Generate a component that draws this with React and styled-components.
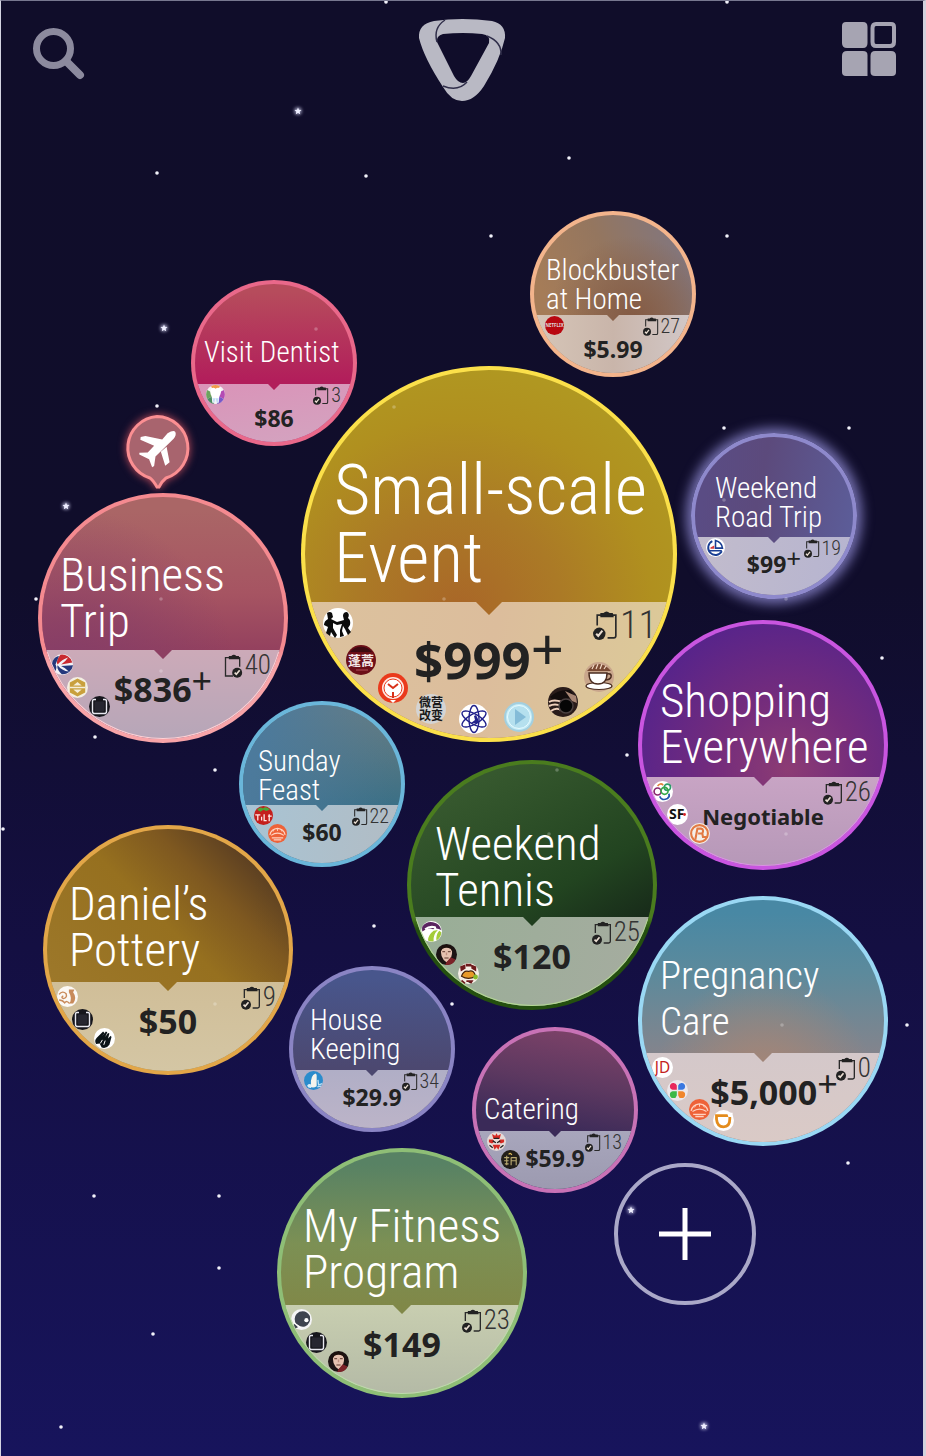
import React from "react";
import styled, { createGlobalStyle, css } from "styled-components";

const Global = createGlobalStyle`
  *, *::before, *::after { box-sizing: border-box; }
  body {
    margin: 0;
    background: #16124f;
    font-family: "Noto Sans", "Noto Sans CJK SC", sans-serif;
  }
  button { font: inherit; color: inherit; cursor: pointer; }
`;

const thin = `"Roboto Condensed", Roboto, "Noto Sans", sans-serif`;

const Screen = styled.main`
  position: relative;
  min-height: 100vh;
  overflow: hidden;
  border-top: 1px solid #77778f;
  border-left: 1px solid #d4d4e2;
  border-right: 3px solid #d2d2dc;
  background: linear-gradient(#100d2a 0%, #100d2b 40%, #140f42 65%, #17145c 100%);
`;

const TopBar = styled.header`
  position: relative;
  z-index: 2;
  display: grid;
  grid-template-columns: 1fr auto 1fr;
  align-items: start;
  padding: 16px 27px 0 31px;
`;

const IconButton = styled.button`
  display: block;
  padding: 0;
  border: 0;
  background: none;
  margin-top: ${(p) => p.$drop || 0}px;
  justify-self: ${(p) => p.$side || "center"};
  svg { display: block; }
`;

const Sky = styled.svg`
  position: absolute;
  top: -1px;
  left: calc(50% - 462px);
  width: 926px;
  height: 1456px;
  pointer-events: none;
  z-index: ${(p) => (p.$front ? 3 : 0)};
`;

const Board = styled.section`
  position: relative;
  z-index: 1;
  min-height: 1350px;
`;

/* Diameter, header height, logo size and text sizes shared by every bubble of one size. */
const sizes = {
  s: { d: 166, split: 100, title: 29, lead: 29, price: 23, plus: 26, up: 5, priceTop: 21, lift: 7, count: 20, logo: 19, clip: [16, 19], notch: 6 },
  m: { d: 250, split: 153, title: 47, lead: 46, price: 34, plus: 36, up: 8, priceTop: 22, lift: 0, count: 27, logo: 21, clip: [20, 24], notch: 9 },
  l: { d: 376, split: 232, title: 70, lead: 68, price: 51, plus: 58, up: 8, priceTop: 31, lift: 0, count: 38, logo: 30, clip: [25, 29], notch: 13 },
};

const Bubble = styled.button`
  position: absolute;
  left: calc(50% + ${(p) => p.$x}px);
  top: ${(p) => p.$y}px;
  width: ${(p) => sizes[p.$size].d}px;
  height: ${(p) => sizes[p.$size].d}px;
  display: grid;
  grid-template-rows: ${(p) => sizes[p.$size].split}px 1fr;
  padding: 0;
  border: 4px solid transparent;
  border-radius: 50%;
  overflow: hidden;
  text-align: left;
  background:
    ${(p) => p.$fill.map((layer) => `${layer} padding-box`).join(", ")},
    linear-gradient(${(p) => p.$ring} 0 63%, ${(p) => p.$foot || p.$ring} 68%) border-box;
  ${(p) => p.$glow && css`box-shadow: 0 0 12px 5px #8d88d0cc;`}

  ${(p) => p.$lip && css`
    &::after {
      content: "";
      position: absolute;
      inset: -1px;
      border: 2px solid ${p.$lip};
      border-radius: 50%;
      clip-path: inset(64% 0 0 0);
    }
  `}
`;

const Title = styled.span`
  align-self: end;
  padding-left: ${(p) => p.$indent}px;
  padding-bottom: ${(p) => p.$drop}px;
  font: 300 ${(p) => p.$text || sizes[p.$size].title}px / ${(p) => sizes[p.$size].lead}px ${thin};
  color: #fff;
  white-space: pre;
`;

const Panel = styled.span`
  position: relative;
  display: grid;
  color: #222;
  &::before {
    content: "";
    grid-area: 1 / 1;
    background: ${(p) => p.$panel};
    clip-path: polygon(
      0 0,
      calc(50% - ${(p) => sizes[p.$size].notch}px) 0,
      50% ${(p) => sizes[p.$size].notch}px,
      calc(50% + ${(p) => sizes[p.$size].notch}px) 0,
      100% 0, 100% 100%, 0 100%
    );
  }
`;

const Price = styled.span`
  grid-area: 1 / 1;
  position: relative;
  justify-self: center;
  align-self: start;
  padding-top: ${(p) => sizes[p.$size].priceTop - (p.$high ? sizes[p.$size].lift : 0)}px;
  padding-left: ${(p) => (p.$crowded ? 22 : 0)}px;
  font: 700 ${(p) => (p.$word ? 22 : sizes[p.$size].price)}px / ${(p) => (p.$size === "l" ? 52 : p.$size === "m" ? 34 : 26)}px "Noto Sans", sans-serif;
  white-space: nowrap;
`;

const Plus = styled.span`
  position: relative;
  top: -${(p) => sizes[p.$size].up}px;
  font-size: ${(p) => sizes[p.$size].plus}px;
  font-weight: 400;
  line-height: 0;
`;

const Count = styled.span`
  grid-area: 1 / 1;
  position: relative;
  justify-self: end;
  align-self: start;
  display: flex;
  align-items: center;
  gap: 2px;
  padding: ${(p) => (p.$size === "l" ? "5px 16px 0 0" : p.$size === "m" ? "3px 13px 0 0" : "1px 12px 0 0")};
  font: 300 ${(p) => sizes[p.$size].count}px / ${(p) => (p.$size === "l" ? 36 : p.$size === "m" ? 25 : 20)}px ${thin};
  color: #333;
`;

const slots = {
  s: [[25, 115], [39, 133]],
  m: [[25, 172], [40, 195], [62, 214], [86, 225]],
  l: [[37, 257], [60, 294], [92, 322], [130, 343], [173, 353], [218, 351], [262, 336], [298, 311]],
};

/* Provider badges sit over the panel, along the rim of the bubble. */
const Badge = styled.svg`
  position: absolute;
  left: ${(p) => Math.floor(slots[p.$size][p.$slot][0] - 4 - sizes[p.$size].logo / 2)}px;
  top: ${(p) => Math.floor(slots[p.$size][p.$slot][1] - 4 - sizes[p.$size].logo / 2)}px;
  width: ${(p) => sizes[p.$size].logo}px;
  height: ${(p) => sizes[p.$size].logo}px;
`;

const Pin = styled.button`
  position: absolute;
  left: calc(50% + ${(p) => p.$x}px);
  top: ${(p) => p.$y}px;
  padding: 0;
  border: 0;
  background: none;
  svg { display: block; overflow: visible; filter: drop-shadow(0 0 4px #f5606acc); }
  svg svg { filter: none; }
`;

const AddButton = styled.button`
  position: absolute;
  left: calc(50% + ${(p) => p.$x}px);
  top: ${(p) => p.$y}px;
  width: 142px;
  height: 142px;
  display: grid;
  place-items: center;
  padding: 0;
  border: 4px solid #aaa8c8;
  border-radius: 50%;
  background: none;
`;

const Disc = ({ c = "#fff" }) => <circle cx="15" cy="15" r="15" fill={c} />;

const marks = {
  tooth: (
    <>
      <Disc c="#f4f4f4" />
      <path d="M15 15L2 8A15 15 0 0 0 2 22Z" fill="#6ca35e" />
      <path d="M15 15L2 22A15 15 0 0 0 12 30Z" fill="#4d8a62" />
      <path d="M15 15L28 8A15 15 0 0 1 28 22Z" fill="#b44bb4" />
      <path d="M15 15L28 22A15 15 0 0 1 18 30Z" fill="#7858c8" />
      <path d="M15 15L8 2A15 15 0 0 1 22 2Z" fill="#f09a4a" />
      <path d="M8 6Q12 3 15 6Q19 3 23 6Q25 12 21 18L20 28H17L15 20L13 28H10L9 18Q5 12 8 6Z" fill="#fff" />
      <path d="M10 21L12 28H13L15 20L17 28H19L20 21Z" fill="#c2dcf6" />
    </>
  ),
  netflix: (
    <>
      <Disc c="#b80710" />
      <text x="15" y="18" textAnchor="middle" fontSize="7" fontWeight="700" fill="#ddd">NETFLIX</text>
    </>
  ),
  sail: (
    <>
      <Disc />
      <path d="M10 5A11.500 11.500 0 1 0 25 21" fill="none" stroke="#1a3f94" strokeWidth="3" />
      <path d="M15 4V16H26Q25 7 15 4Z" fill="none" stroke="#1a3f94" strokeWidth="2.5" />
      <path d="M7 15L13 12V17H7Z" fill="#d83a3a" />
      <path d="M6 20H25" stroke="#1a3f94" strokeWidth="2.5" />
    </>
  ),
  handshake: (
    <>
      <Disc />
      <path d="M4 5Q7 3 9 5L10 9L8 11L14 14L21 12L20 8Q20 4 24 4Q27 6 25 10Q28 12 27 17L25 20L28 24L25 27L22 21L20 18L19 23L21 28L17 29L17 22L19 16L14 17L10 15L10 20L14 27L12 30L8 24L7 28L3 25L5 19L1 17Q1 13 5 11Z" fill="#0c0c0c" />
    </>
  ),
  theatre: (
    <>
      <Disc c="#6c0f18" />
      <path d="M4 7A14 14 0 0 1 26 7" fill="#3c0a12" />
      <text x="15" y="20" textAnchor="middle" fontSize="13" fontWeight="700" fill="#f4e8e8">蓬蒿</text>
      <path d="M10 25H22" stroke="#b05058" strokeWidth="1" />
    </>
  ),
  clock: (
    <>
      <Disc c="#ea3a1c" />
      <circle cx="15" cy="15" r="11" fill="#ffe9e4" />
      <circle cx="15" cy="15" r="9" fill="#fff" stroke="#ea3a1c" strokeWidth="1" />
      <path d="M10 11L15 15L20 11M15 19V25" fill="none" stroke="#d8321a" strokeWidth="2" />
      <path d="M12 27L15 30L18 27Z" fill="#fff" />
    </>
  ),
  seal: (
    <>
      <Disc c="#d4d4d4" />
      <text textAnchor="middle" fontSize="12" fontWeight="700" fill="#1a1a1a">
        <tspan x="15" y="13">微营</tspan>
        <tspan x="15" y="26">改变</tspan>
      </text>
    </>
  ),
  atom: (
    <>
      <Disc />
      <g fill="none" stroke="#22228c" strokeWidth="1.4">
        <ellipse cx="15" cy="15" rx="5" ry="13.5" />
        <ellipse cx="15" cy="15" rx="5" ry="13.5" transform="rotate(60 15 15)" />
        <ellipse cx="15" cy="15" rx="5" ry="13.5" transform="rotate(120 15 15)" />
      </g>
      <path d="M12 19H19V15L17 11L15 12L16 16Z" fill="#22228c" />
    </>
  ),
  play: (
    <>
      <Disc c="#a3cfdf" />
      <circle cx="15" cy="15" r="13" fill="#c4ebf6" />
      <circle cx="15" cy="15" r="11.5" fill="#b5e0ee" stroke="#e8fbff" strokeWidth="1" />
      <path d="M11 7L22 15L11 23Z" fill="#84bcd8" />
    </>
  ),
  camera: (
    <>
      <Disc c="#2a1c1a" />
      <path d="M2 10Q10 2 22 3L26 9L14 14L4 12Z" fill="#120c0c" />
      <path d="M1 15Q6 12 14 15M1 19Q7 16 13 19M3 24Q8 20 13 23" fill="none" stroke="#f0d0bc" strokeWidth="2" />
      <path d="M17 4L28 9L29 16L24 14Z" fill="#a88674" />
      <circle cx="18" cy="19" r="7" fill="#060606" stroke="#4a4040" strokeWidth="1.5" />
    </>
  ),
  coffee: (
    <>
      <Disc c="#c9a68c" />
      <path d="M3 9Q15 -5 27 9Z" fill="#7a4a34" />
      <path d="M8 7L10 3M12 7L14 2M16 7L18 2M20 7L22 4" stroke="#f0d8c4" strokeWidth="1.2" />
      <ellipse cx="15" cy="24" rx="13" ry="3.5" fill="#fff" stroke="#4a2c20" strokeWidth="1.2" />
      <path d="M5 11H23Q23 22 14 22Q5 22 5 11Z" fill="#fff" stroke="#4a2c20" strokeWidth="1.4" />
      <path d="M23 12Q28 11 27 15Q26 18 21 18" fill="none" stroke="#4a2c20" strokeWidth="1.6" />
    </>
  ),
  airline: (
    <>
      <Disc c="#f2f2f6" />
      <path d="M12 1A15 15 0 0 1 29 12L13 15Q20 10 23 5Q14 8 8 15Q5 10 12 1Z" fill="#c92a30" />
      <path d="M14 29A15 15 0 0 0 30 16L13 17Q20 20 24 25Q14 24 8 16Q6 21 14 29Z" fill="#24387c" />
      <path d="M1 10A15 15 0 0 0 4 25Q8 20 5 15Q8 8 10 3Q4 4 1 10Z" fill="#24387c" />
    </>
  ),
  hexagon: (
    <>
      <Disc c="#f4efe2" />
      <path d="M15 2L26 8V22L15 28L4 22V8Z" fill="#c9a03c" />
      <path d="M15 7L21 12H9ZM15 23L21 18H9Z" fill="#f6eed8" />
      <path d="M4 15H26" stroke="#f6eed8" strokeWidth="2" />
    </>
  ),
  square: (
    <>
      <Disc c="#16161c" />
      <path d="M10 5H7Q5 5 5 8V22Q5 25 8 25H22Q25 25 25 22V8Q25 5 23 5H20" fill="none" stroke="#e8e8f0" strokeWidth="2" />
      <rect x="8" y="8" width="14" height="14" rx="2" fill="#262630" />
    </>
  ),
  rings: (
    <>
      <Disc />
      <g fill="none" strokeWidth="2.4">
        <circle cx="8" cy="15" r="5" stroke="#8a2870" />
        <path d="M8 7Q12 2 16 6" stroke="#e0823c" />
        <circle cx="22" cy="9" r="4.5" stroke="#2e9a6a" />
        <path d="M11 22Q14 29 22 25Q26 22 24 18" stroke="#2458b0" />
        <circle cx="18" cy="14" r="5" stroke="#38a848" />
      </g>
    </>
  ),
  courier: (
    <>
      <Disc />
      <text x="14" y="22" textAnchor="middle" fontSize="20" fontWeight="700" fill="#111">SF</text>
      <circle cx="25" cy="15" r="2" fill="#d82020" />
    </>
  ),
  letterA: (
    <>
      <Disc c="#f4efe8" />
      <circle cx="15" cy="15" r="12" fill="none" stroke="#e27a44" strokeWidth="3" />
      <path d="M9 24L12 8H17Q22 9 19 15H13M19 15L20 20H27" fill="none" stroke="#e27a44" strokeWidth="3" />
    </>
  ),
  tomato: (
    <>
      <Disc c="#c41f1c" />
      <path d="M5 6Q10 0 14 4Q20 -1 25 6L19 8L15 6L10 9Z" fill="#4aa83a" />
      <path d="M2 14H10M6 14V23M12 17V23M16 13V23H20M22 16H28M24 13V24" fill="none" stroke="#ffeae8" strokeWidth="2" />
    </>
  ),
  bun: (
    <>
      <Disc c="#ee6238" />
      <path d="M3 17Q5 8 15 7Q25 8 27 17M5 18Q15 11 25 18M6 22H24M9 25H21" fill="none" stroke="#ffd2c0" strokeWidth="1.8" />
      <path d="M10 8L8 12M15 7V11M20 8L22 12" stroke="#ffd2c0" strokeWidth="1.4" />
    </>
  ),
  court: (
    <>
      <Disc />
      <path d="M2 8A15 15 0 0 1 29 13Q22 9 18 12Q10 8 2 15Q1 11 2 8Z" fill="#5a2460" />
      <path d="M6 12Q12 7 20 9Q22 12 15 15Q8 20 8 28" fill="none" stroke="#fff" strokeWidth="3" />
      <path d="M18 14Q10 20 10 28Q14 30 18 29Q17 20 24 13ZM26 14Q21 20 22 28A15 15 0 0 0 29 16Z" fill="#a4cc3a" />
    </>
  ),
  portrait: (
    <>
      <Disc c="#1c1414" />
      <path d="M7 11Q7 2 15 2Q23 2 23 11Q23 19 18 24L15 26L11 23Q7 18 7 11Z" fill="#e6c2b0" />
      <path d="M6 12Q5 1 15 1Q25 1 24 12L21 7Q15 4 9 7Z" fill="#1c100c" />
      <path d="M9 11H13M17 11H21M12 20H18" stroke="#5a342a" strokeWidth="1.4" />
      <path d="M15 12V16" stroke="#c09080" strokeWidth="2" />
      <path d="M21 19L28 22A15 15 0 0 1 13 30L15 26Z" fill="#7c2228" />
    </>
  ),
  mascot: (
    <>
      <Disc c="#f6efe6" />
      <path d="M3 5L10 2L11 8L4 12ZM19 2L26 5L26 12L19 8ZM11 1H19V5H11Z" fill="#6e1a1c" />
      <path d="M5 19Q8 10 15 12Q23 9 25 19Q15 25 5 19Z" fill="#e89a28" stroke="#46240c" strokeWidth="1.6" />
      <circle cx="25" cy="20" r="3.5" fill="#86bc2c" />
      <path d="M5 25L10 29M12 26H20L18 29" stroke="#6e1a1c" strokeWidth="2.4" />
    </>
  ),
  vase: (
    <>
      <Disc c="#fbf8f4" />
      <path d="M17 5H25L23 9Q29 17 23 25H18Q22 17 17 9Z" fill="#c88a5a" />
      <path d="M3 12Q8 6 13 11Q15 17 9 18Q5 16 9 14M3 20Q8 20 11 24Q14 20 18 25" fill="none" stroke="#c88a5a" strokeWidth="2" />
    </>
  ),
  hands: (
    <>
      <Disc />
      <path d="M4 14L13 5L15 7L11 13L17 5L19 6L16 13L20 7L22 8L20 15L24 11L25 13L22 24Q18 30 11 28L8 22L3 23Q0 18 4 14Z" fill="#0b1418" />
      <path d="M12 17L9 22M16 18L14 24" stroke="#fff" strokeWidth="1.4" />
    </>
  ),
  jd: (
    <>
      <Disc />
      <text x="15" y="23" textAnchor="middle" fontSize="22" fill="#c41e22">JD</text>
    </>
  ),
  petals: (
    <>
      <Disc c="#ece8ec" />
      <path d="M14 14H8A5 5 0 1 1 14 8Z" fill="#e8285c" />
      <path d="M16 14V8A5 5 0 1 1 22 14Z" fill="#3a78e0" />
      <path d="M14 16V22A5 5 0 1 1 8 16Z" fill="#3cb848" />
      <path d="M16 16H22A5 5 0 1 1 16 22Z" fill="#f0862c" />
    </>
  ),
  taxi: (
    <>
      <Disc />
      <path d="M5 8H24V13Q24 24 15 24Q6 24 5 13Z" fill="none" stroke="#e48c1c" strokeWidth="4" />
      <path d="M20 4H28V10H22Z" fill="#fff" />
    </>
  ),
  cleaning: (
    <>
      <Disc c="#2a8ccc" />
      <path d="M11 22Q10 7 18 4L20 6V24Q14 28 9 24Z" fill="#f4f4ec" />
      <path d="M22 14L23 22L29 20M21 25L27 24" fill="none" stroke="#bfe2f4" strokeWidth="2" />
      <path d="M5 23Q8 19 12 22L11 27Q6 27 5 23Z" fill="#d8eefa" />
    </>
  ),
  lion: (
    <>
      <Disc c="#e6dad8" />
      <path d="M8 3L13 6L15 2L17 6L22 3L20 11H10ZM3 12H9L12 15L8 18L3 16ZM27 12H21L18 15L22 18L27 16ZM9 20H21L18 28L15 24L12 28Z" fill="#d62a24" />
      <path d="M11 10H19M9 14L14 17M21 14L16 17M4 21L9 25M26 21L21 25" stroke="#222" strokeWidth="2" />
    </>
  ),
  tavern: (
    <>
      <Disc c="#221e1a" />
      <path d="M5 12H13M5 17H12M6 22H12M9 9V24M16 12H24V24M16 12V24M16 17H24" fill="none" stroke="#b8a870" strokeWidth="1.8" />
      <path d="M12 7Q15 3 17 8" fill="none" stroke="#d8b858" strokeWidth="2" />
    </>
  ),
  paddle: (
    <>
      <Disc c="#f4f4f6" />
      <path d="M6 19Q3 9 12 4Q22 1 27 10Q29 21 20 25Q14 26 10 23L7 21Z" fill="#3e4450" />
      <path d="M5 21L3 25L6 28L10 26Z" fill="#3e4450" />
      <circle cx="22" cy="16" r="3" fill="#fff" />
      <path d="M4 19L14 27" stroke="#fff" strokeWidth="1.5" />
    </>
  ),
};

const Clipboard = ({ size, flip }) => {
  const [w, h] = sizes[size].clip;
  const cx = flip ? 17 : 6;
  return (
    <svg width={w} height={h} viewBox="0 0 24 28" aria-hidden="true">
      <path
        d={flip ? "M20 15V4H3V26H12" : "M4 14V4H22V24Q22 26 20 26H14"}
        fill="none"
        stroke="#2a2a2a"
        strokeWidth="1.6"
      />
      <path d="M7 2H10Q13 -1 16 2H19L20 6H7Z" fill="#222" />
      <circle cx={cx} cy="22" r="6" fill="#222" />
      <path d={`M${cx - 3} 22L${cx - 1} 24L${cx + 3} 19`} fill="none" stroke="#e8dcd0" strokeWidth="2" />
    </svg>
  );
};

const wishes = [
  { size: "s", x: 530, y: 211, title: "Blockbuster\nat Home", indent: 12, drop: 1, price: "$5.99", count: 27, logos: ["netflix"],
    ring: "#f3b48c", fill: ["radial-gradient(circle at 62% 66%, #835a44 0, transparent 58%)", "linear-gradient(65deg, #a57c58 20%, #94765f 55%, #83767c 88%)"], panel: "linear-gradient(90deg, #d6c6b8, #c9b5aa 50%, #d2c8c8)" },
  { size: "s", x: 191, y: 280, title: "Visit Dentist", indent: 9, drop: 17, price: "$86", count: 3, logos: ["tooth"],
    ring: "#e9688a", fill: ["linear-gradient(#b64c5c 5%, #b21d5b 62%)"], panel: "linear-gradient(170deg, #da93b8, #d3a4c0)" },
  { size: "l", x: 301, y: 366, title: "Small-scale\nEvent", indent: 29, drop: 10, price: "$999", plus: true, count: 11,
    logos: ["handshake", "theatre", "clock", "seal", "atom", "play", "camera", "coffee"],
    ring: "#fbe04a", fill: ["radial-gradient(circle at 42% 66%, #a96628 0, #ab7a26 32%, #b0901f 60%, #b09a22 82%)"], panel: "linear-gradient(100deg, #dcc29e, #dcbd9c 50%, #dccb98)" },
  { size: "s", x: 691, y: 433, title: "Weekend\nRoad Trip", indent: 20, drop: 5, price: "$99", plus: true, high: true, count: 19, logos: ["sail"], glow: true,
    ring: "#8e89cc", fill: ["linear-gradient(100deg, #5a4c84 10%, #5c4a7c 40%, #5c5f9c)"], panel: "linear-gradient(100deg, #c2bccc, #b6b4d0)" },
  { size: "m", x: 38, y: 493, title: "Business\nTrip", indent: 18, drop: 6, price: "$836", plus: true, count: 40, flip: true,
    logos: ["airline", "hexagon", "square"], ring: "#f48a90", foot: "#f8a4a8", lip: "#ffd0d4",
    fill: ["radial-gradient(circle at 10% 75%, #853e68 0, transparent 60%)", "linear-gradient(#aa6666 5%, #a65462 40%, #93405e 64%)"], panel: "linear-gradient(#ccaab8, #b6a6b8)" },
  { size: "m", x: 638, y: 620, title: "Shopping\nEverywhere", indent: 18, drop: 7, price: "Negotiable", word: true, count: 26,
    logos: ["rings", "courier", "letterA"], ring: "#c955e0", lip: "#dc90e6",
    fill: ["radial-gradient(circle at 60% 60%, #8c3c74 0, #742c7c 35%, #58248a 75%)"], panel: "linear-gradient(#c8a4c4, #b698b8)" },
  { size: "s", x: 239, y: 701, title: "Sunday\nFeast", indent: 15, drop: 0, price: "$60", high: true, count: 22, logos: ["tomato", "bun"],
    ring: "#6ab6da", fill: ["linear-gradient(100deg, #4c7a9c 10%, transparent 90%)", "linear-gradient(#687c80 5%, #3c7086 62%)"], panel: "linear-gradient(100deg, #a8c4d4, #b2bcc4)" },
  { size: "m", x: 407, y: 760, title: "Weekend\nTennis", indent: 24, drop: 4, price: "$120", count: 25,
    logos: ["court", "portrait", "mascot"], ring: "#4a7c1e", foot: "#24500f", lip: "#b4d894",
    fill: ["linear-gradient(150deg, #36582e 15%, #224420 55%, #182c1a 75%)"], panel: "linear-gradient(100deg, #98ae96, #a6aca0)" },
  { size: "m", x: 43, y: 825, title: "Daniel’s\nPottery", indent: 22, drop: 9, price: "$50", count: 9,
    logos: ["vase", "square", "hands"], ring: "#e2a648",
    fill: ["linear-gradient(225deg, #573c22 12%, #7e5820 28%, #96701f 45%, #a07c30)"], panel: "linear-gradient(#d0be98, #d4c6a4)" },
  { size: "m", x: 638, y: 896, title: "Pregnancy\nCare", indent: 18, drop: 8, text: 39, price: "$5,000", plus: true, count: 0,
    logos: ["jd", "petals", "bun", "taxi"], ring: "#9ad8f4",
    fill: ["radial-gradient(circle at 50% 75%, #a88674 0, transparent 50%)", "linear-gradient(#4888a4 5%, #5c8a9c 30%, #84848c 64%)"], panel: "linear-gradient(#d4c8ca, #dacac6)" },
  { size: "s", x: 289, y: 966, title: "House\nKeeping", indent: 17, drop: 6, price: "$29.9", high: true, count: 34, logos: ["cleaning"],
    ring: "#8a84c4", fill: ["linear-gradient(#48568c 5%, #4c4870 62%)"], panel: "linear-gradient(#b0aec6, #bcb4c8)" },
  { size: "s", x: 472, y: 1027, title: "Catering", indent: 8, drop: 7, price: "$59.9", high: true, count: 13, logos: ["lion", "tavern"],
    ring: "#c872b6", fill: ["linear-gradient(190deg, #7c4268 5%, #5c3860 35%, #3a2a58 62%)"], panel: "linear-gradient(#a8a6bc, #9c9ab0)" },
  { size: "m", x: 277, y: 1148, title: "My Fitness\nProgram", indent: 22, drop: 10, price: "$149", count: 23,
    logos: ["paddle", "square", "portrait"], ring: "#8ebe76", lip: "#bcdcaa",
    fill: ["linear-gradient(#588264 5%, #7c9054 38%, #808848 64%)"], panel: "linear-gradient(#c8ceb0, #b4baa6)" },
];

const Wish = ({ wish: w }) => (
  <Bubble $size={w.size} $x={w.x - 462} $y={w.y - 101} $ring={w.ring} $foot={w.foot} $lip={w.lip} $fill={w.fill} $glow={w.glow}>
    <Title $size={w.size} $indent={w.indent} $drop={w.drop} $text={w.text}>{w.title}</Title>
    <Panel $size={w.size} $panel={w.panel}>
      <Price $size={w.size} $high={w.high} $word={w.word} $crowded={w.logos.length === 4}>
        {w.price}
        {w.plus && <Plus $size={w.size}>+</Plus>}
      </Price>
      <Count $size={w.size}>
        <Clipboard size={w.size} flip={w.flip} />
        {w.count}
      </Count>
    </Panel>
    {w.logos.map((name, i) => (
      <Badge key={name} $size={w.size} $slot={i} viewBox="0 0 30 30" aria-hidden="true">{marks[name]}</Badge>
    ))}
  </Bubble>
);

const bigStars = [[298, 111], [164, 328], [66, 506], [704, 1426], [631, 1210]];
const smallStars = [
  [386, 2], [727, 2], [157, 173], [366, 176], [569, 158], [491, 236], [727, 236], [157, 406], [36, 599], [95, 737],
  [215, 770], [3, 829], [724, 428], [849, 428], [882, 658], [627, 755], [374, 926], [452, 1004], [907, 1025],
  [848, 1163], [94, 1196], [219, 1196], [219, 1268], [153, 1334], [61, 1427],
];
const veiledStars = [
  [786, 599], [316, 329], [394, 407], [444, 599], [161, 599], [161, 671], [557, 770], [549, 834], [782, 1025], [786, 834], [215, 1004], [724, 500],
];

export default function App() {
  return (
    <>
      <Global />
      <Screen>
        <Sky viewBox="0 0 926 1456" aria-hidden="true">
          <defs>
            <filter id="halo" x="-100%" y="-100%" width="300%" height="300%"><feGaussianBlur stdDeviation="1.5" /></filter>
          </defs>
          {smallStars.map(([x, y]) => <circle key={`${x}-${y}`} cx={x} cy={y} r="1.8" fill="#f2f2fa" />)}
          {bigStars.map(([x, y]) => (
            <g key={`${x}-${y}`} transform={`translate(${x} ${y})`}>
              <circle r="4" fill="#c8c8e8" filter="url(#halo)" opacity="0.6" />
              <path d="M0 -3.6L1 -1.2L3.5 -1L1.7 .8L2.2 3.2L0 2L-2.2 3.2L-1.7 .8L-3.5 -1L-1 -1.2Z" fill="#eef" />
            </g>
          ))}
        </Sky>
        <TopBar>
          <IconButton aria-label="Search" $side="start" $drop={10}>
            <svg width="54" height="54" viewBox="0 0 54 54">
              <circle cx="21.5" cy="21.5" r="17" fill="none" stroke="#8c8a9e" strokeWidth="7" />
              <path d="M34 34L48 48" stroke="#8c8a9e" strokeWidth="8" strokeLinecap="round" />
            </svg>
          </IconButton>
          <IconButton aria-label="Home">
            <svg width="90" height="84" viewBox="419 17 90 84" overflow="visible">
              <path
                fillRule="evenodd"
                fill="#b9b9c4"
                d="M434 21Q462 17 492 21Q506 24 505 38Q500 60 484 86Q474 101 462 101Q451 101 443 87Q424 58 419 38Q418 24 434 21ZM437 42L454 76Q458 83 463 83Q467 83 471 76L489 43Q491 35 482 34Q463 32 443 34Q436 36 437 42Z"
              />
              <path d="M445 20Q433 28 437 42M487 36Q502 42 501 55M443 86Q458 92 467 82" fill="none" stroke="#302e4a" strokeWidth="1.5" />
            </svg>
          </IconButton>
          <IconButton aria-label="Views" $side="end" $drop={5}>
            <svg width="54" height="55" viewBox="0 0 54 55">
              <g fill="#a6a4b2">
                <path d="M4 0H21Q25.5 0 25.5 5V21Q25.5 26 21 26H5Q0 26 0 21V4Q0 0 4 0Z" />
                <path d="M5 29H21Q25.5 29 25.5 33V54H4Q0 54 0 50V34Q0 29 5 29Z" />
                <path d="M33 29H49Q54 29 54 34V50Q54 54 50 54H33Q28.5 54 28.5 50V34Q28.5 29 33 29Z" />
              </g>
              <path d="M34 2H49Q52 2 52 5V20Q52 24 48 24H34Q30.5 24 30.5 20V6Q30.5 2 34 2Z" fill="none" stroke="#a6a4b2" strokeWidth="4" />
            </svg>
          </IconButton>
        </TopBar>
        <Board>
          {wishes.map((w) => <Wish key={w.title} wish={w} />)}
          <Pin aria-label="Flight booked" $x={-338} $y={314}>
            <svg width="66" height="74" viewBox="0 0 66 74">
              <path
                d="M33 1.5A31.5 31.5 0 0 1 42 63Q38 66 35 72H33Q29 65 26 63A31.5 31.5 0 0 1 33 1.5Z"
                fill="#a8646e"
                stroke="#fb8f92"
                strokeWidth="3"
              />
              <svg x="15" y="16" width="37" height="37" viewBox="359 92 110 110">
                <path
                  fill="#fff"
                  d="M444 99Q462 88 467 95Q471 104 462 115L408 168L404 196L398 200L389 176L360 162V157L385 156L404 136L363 118L364 110L378 107L428 117ZM441 139L450 185L437 195L424 154Z"
                />
              </svg>
            </svg>
          </Pin>
          <AddButton aria-label="Add a wish" $x={152} $y={1062}>
            <svg width="52" height="52" viewBox="0 0 52 52">
              <path d="M26 0V52M0 26H52" stroke="#fff" strokeWidth="5" />
            </svg>
          </AddButton>
        </Board>
        <Sky $front viewBox="0 0 926 1456" aria-hidden="true">
          {veiledStars.map(([x, y]) => <circle key={`${x}-${y}`} cx={x} cy={y} r="1.8" fill="#fff" opacity="0.25" />)}
        </Sky>
      </Screen>
    </>
  );
}
